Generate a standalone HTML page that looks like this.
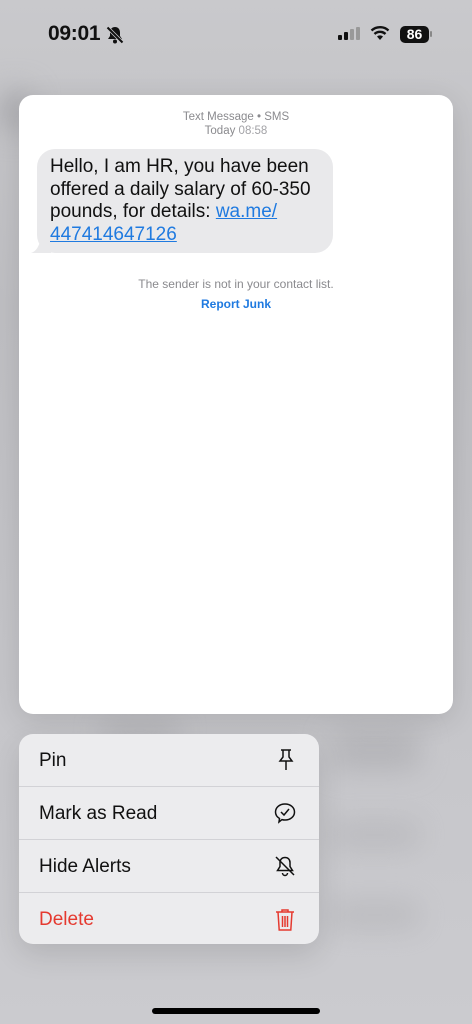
<!DOCTYPE html>
<html><head><meta charset="utf-8"><style>
body{margin:0;width:472px;height:1024px;overflow:hidden;font-family:"Liberation Sans",sans-serif;background:linear-gradient(180deg,#c9c9cc 0%,#bfbfc3 30%,#c6c6ca 70%,#cbcbcf 100%);position:relative}
.blob{position:absolute;background:#a9a9ad;filter:blur(14px);border-radius:10px}
.sb{position:absolute;top:22px;left:48px;font-size:21px;font-weight:bold;color:#111;letter-spacing:-0.3px}
.card{position:absolute;left:19px;top:95px;width:434px;height:619px;background:#fff;border-radius:14px;box-shadow:0 6px 30px rgba(0,0,0,.12)}
.hdr{position:absolute;top:15px;width:100%;text-align:center;font-size:11.5px;color:#8a8a8e;line-height:14px}
.bub{position:absolute;left:18px;top:54px;width:296px;height:104px;background:#e9e9eb;border-radius:18px}
.btxt{position:absolute;left:31px;top:61px;font-size:19px;line-height:22.5px;color:#111}
.btxt a{color:#1f7ae0;text-decoration:underline}
.menu{position:absolute;left:19px;top:734px;width:300px;height:210px;background:#ececee;border-radius:14px;overflow:hidden;box-shadow:0 10px 30px rgba(0,0,0,.12)}
.row{height:52px;border-bottom:1px solid #d2d2d6;position:relative;font-size:19px;color:#111}
.row span{position:absolute;left:20px;top:16px}
.row svg{position:absolute;right:22px;top:14px}
.row:last-child{border:none}
</style></head><body>
<div class="blob" style="left:0;top:90px;width:30px;height:40px"></div>
<div class="blob" style="left:330px;top:730px;width:90px;height:40px;opacity:.6"></div>
<div class="blob" style="left:330px;top:820px;width:90px;height:30px;opacity:.4"></div>
<div class="blob" style="left:330px;top:900px;width:90px;height:30px;opacity:.4"></div>
<div class="blob" style="left:100px;top:720px;width:80px;height:20px;opacity:.6"></div>
<div class="sb">09:01</div>
<svg style="position:absolute;left:105px;top:25px" width="20" height="20" viewBox="0 0 20 20"><path d="M10 2c3 0 5 2.3 5 5.5v3.5l2 3H3l2-3V7.5C5 4.3 7 2 10 2z" fill="#111"/><circle cx="10" cy="16.5" r="2" fill="#111"/><path d="M2 2l16 16" stroke="#c9c9cc" stroke-width="3.5"/><path d="M2.5 2.5l15 15" stroke="#111" stroke-width="2"/></svg>
<svg style="position:absolute;left:338px;top:27px" width="24" height="16"><rect x="0" y="8" width="4" height="5" rx="1" fill="#111"/><rect x="6" y="5" width="4" height="8" rx="1" fill="#111"/><rect x="12" y="2" width="4" height="11" rx="1" fill="#999"/><rect x="18" y="0" width="4" height="13" rx="1" fill="#999"/></svg>
<svg style="position:absolute;left:370px;top:25px" width="20" height="16" viewBox="0 0 20 16"><path d="M10 15l3-3.5a4.5 4.5 0 0 0-6 0z" fill="#111"/><path d="M4.5 9a8 8 0 0 1 11 0" stroke="#111" stroke-width="2.4" fill="none"/><path d="M1.5 5.5a12.5 12.5 0 0 1 17 0" stroke="#111" stroke-width="2.4" fill="none"/></svg>
<div style="position:absolute;left:400px;top:26px;width:29px;height:17px;background:#111;border-radius:5px;color:#fff;font-size:14px;font-weight:bold;text-align:center;line-height:17px">86</div>
<div style="position:absolute;left:430px;top:31px;width:2px;height:6px;background:#888;border-radius:1px"></div>
<div class="card">
<div class="hdr">Text Message • SMS<br>Today <span style="color:#a2a2a6">08:58</span></div>
<div class="bub"></div>
<svg style="position:absolute;left:12px;top:140px" width="20" height="20"><path d="M20 0v18H0c6-2 9-8 10-18z" fill="#e9e9eb"/></svg>
<div class="btxt">Hello, I am HR, you have been<br>offered a daily salary of 60-350<br>pounds, for details: <a>wa.me/</a><br><a>447414647126</a></div>
<div style="position:absolute;top:182px;width:100%;text-align:center;font-size:12px;color:#8a8a8e">The sender is not in your contact list.</div>
<div style="position:absolute;top:202px;width:100%;text-align:center;font-size:12px;color:#1f7ae0;font-weight:bold">Report Junk</div>
</div>
<div class="menu">
<div class="row"><span>Pin</span><svg width="22" height="24" viewBox="0 0 22 24" fill="none" stroke="#111" stroke-width="1.5"><path d="M6 2h10M8 2v7l-3 4h12l-3-4V2M11 13v9"/></svg></div>
<div class="row"><span>Mark as Read</span><svg width="24" height="24" viewBox="0 0 24 24" fill="none" stroke="#111" stroke-width="1.5"><path d="M12 3c5.5 0 9.5 3.5 9.5 8s-4 8-9.5 8c-1 0-2-.1-3-.4L6 21l.5-3.5C4 16 2.5 13.8 2.5 11 2.5 6.5 6.5 3 12 3z"/><path d="M8 11l3 3 5-6"/></svg></div>
<div class="row"><span>Hide Alerts</span><svg width="24" height="24" viewBox="0 0 24 24" fill="none" stroke="#111" stroke-width="1.5"><path d="M7 8.5C7 5.5 9 3.5 12 3.5s5 2 5 5v4l2.5 4H4.5L7 12.5z"/><path d="M9.5 19a2.5 2.5 0 0 0 5 0M3 3l18 18"/></svg></div>
<div class="row" style="color:#e5392f"><span>Delete</span><svg width="24" height="26" viewBox="0 0 24 26" fill="none" stroke="#e5392f" stroke-width="1.5"><path d="M3 5h18M9 5V3h6v2M5 5l1.2 18h11.6L19 5M9.5 9v11M12 9v11M14.5 9v11"/></svg></div>
</div>
<div style="position:absolute;left:152px;top:1008px;width:168px;height:6px;background:#000;border-radius:3px"></div>
</body></html>
